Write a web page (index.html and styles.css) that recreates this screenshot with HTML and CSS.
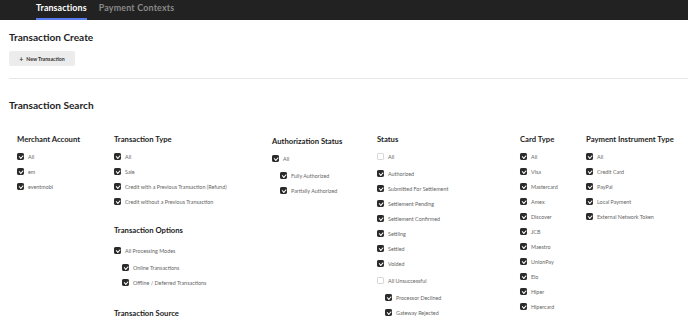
FILE: index.html
```html
<!DOCTYPE html>
<html lang="en">
<head>
<meta charset="utf-8">
<title>Transactions</title>
<link rel="stylesheet" href="styles.css">
</head>
<body>
<header class="topbar">
  <nav class="tabs">
    <a class="tab active">Transactions</a>
    <a class="tab">Payment Contexts</a>
  </nav>
</header>
<main class="page">
  <section class="create">
    <h2 class="section-title">Transaction Create</h2>
    <button class="btn"><span class="plus">+</span>New Transaction</button>
  </section>
  <hr class="divider">
  <section class="search">
    <h2 class="section-title">Transaction Search</h2>
    <div class="filters">
      <div class="col">
        <h3 class="group-title">Merchant Account</h3>
        <ul class="opts">
          <li class="opt"><span class="cb on"></span>All</li>
          <li class="opt"><span class="cb on"></span>em</li>
          <li class="opt"><span class="cb on"></span>eventmobi</li>
        </ul>
      </div>
      <div class="col">
        <h3 class="group-title">Transaction Type</h3>
        <ul class="opts">
          <li class="opt"><span class="cb on"></span>All</li>
          <li class="opt"><span class="cb on"></span>Sale</li>
          <li class="opt"><span class="cb on"></span>Credit with a Previous Transaction (Refund)</li>
          <li class="opt"><span class="cb on"></span>Credit without a Previous Transaction</li>
        </ul>
        <h3 class="group-title next">Transaction Options</h3>
        <ul class="opts wide">
          <li class="opt parent"><span class="cb on"></span>All Processing Modes</li>
          <li class="opt sub"><span class="cb on"></span>Online Transactions</li>
          <li class="opt sub"><span class="cb on"></span>Offline / Deferred Transactions</li>
        </ul>
        <h3 class="group-title next last">Transaction Source</h3>
      </div>
      <div class="col shifted">
        <h3 class="group-title">Authorization Status</h3>
        <ul class="opts">
          <li class="opt parent"><span class="cb on"></span>All</li>
          <li class="opt sub"><span class="cb on"></span>Fully Authorized</li>
          <li class="opt sub"><span class="cb on"></span>Partially Authorized</li>
        </ul>
      </div>
      <div class="col">
        <h3 class="group-title">Status</h3>
        <ul class="opts">
          <li class="opt parent"><span class="cb"></span>All</li>
          <li class="opt"><span class="cb on"></span>Authorized</li>
          <li class="opt"><span class="cb on"></span>Submitted For Settlement</li>
          <li class="opt"><span class="cb on"></span>Settlement Pending</li>
          <li class="opt"><span class="cb on"></span>Settlement Confirmed</li>
          <li class="opt"><span class="cb on"></span>Settling</li>
          <li class="opt"><span class="cb on"></span>Settled</li>
          <li class="opt"><span class="cb on"></span>Voided</li>
          <li class="opt parent gapped"><span class="cb"></span>All Unsuccessful</li>
          <li class="opt sub"><span class="cb on"></span>Processor Declined</li>
          <li class="opt sub"><span class="cb on"></span>Gateway Rejected</li>
        </ul>
      </div>
      <div class="col">
        <h3 class="group-title">Card Type</h3>
        <ul class="opts">
          <li class="opt"><span class="cb on"></span>All</li>
          <li class="opt"><span class="cb on"></span>Visa</li>
          <li class="opt"><span class="cb on"></span>Mastercard</li>
          <li class="opt"><span class="cb on"></span>Amex</li>
          <li class="opt"><span class="cb on"></span>Discover</li>
          <li class="opt"><span class="cb on"></span>JCB</li>
          <li class="opt"><span class="cb on"></span>Maestro</li>
          <li class="opt"><span class="cb on"></span>UnionPay</li>
          <li class="opt"><span class="cb on"></span>Elo</li>
          <li class="opt"><span class="cb on"></span>Hiper</li>
          <li class="opt"><span class="cb on"></span>Hipercard</li>
        </ul>
      </div>
      <div class="col">
        <h3 class="group-title">Payment Instrument Type</h3>
        <ul class="opts">
          <li class="opt"><span class="cb on"></span>All</li>
          <li class="opt"><span class="cb on"></span>Credit Card</li>
          <li class="opt"><span class="cb on"></span>PayPal</li>
          <li class="opt"><span class="cb on"></span>Local Payment</li>
          <li class="opt"><span class="cb on"></span>External Network Token</li>
        </ul>
      </div>
    </div>
  </section>
</main>
</body>
</html>
```
FILE: styles.css
```css
* { box-sizing: border-box; }
html, body { margin: 0; padding: 0; background: #fff; }
body {
  font-family: Lato, "Noto Sans", "Liberation Sans", sans-serif;
  color: #222;
  overflow: hidden;
}
.topbar {
  height: 20px;
  background: #222;
  padding-left: 36px;
}
.tabs { display: flex; gap: 12px; height: 20px; }
.tab {
  display: block;
  height: 20px;
  line-height: 15px;
  font-size: 8.9px;
  font-weight: 700;
  color: #8a8a8a;
  border-bottom: 2px solid transparent;
  letter-spacing: 0.1px;
}
.tab.active { color: #fff; border-bottom-color: #5b7cf0; }
.tab + .tab { letter-spacing: 0.2px; }

.page { padding-left: 9px; }
.section-title {
  margin: 0;
  font-size: 10.1px;
  line-height: 13px;
  font-weight: 700;
  color: #1d1d1d;
}
.create { padding-top: 11px; }
.btn {
  display: flex;
  align-items: center;
  justify-content: center;
  margin-top: 7px;
  width: 66px;
  height: 15px;
  padding: 0;
  border: 0;
  border-radius: 2px;
  background: #ececec;
  font-family: inherit;
  font-size: 5.2px;
  font-weight: 700;
  color: #333;
}
.plus { font-size: 7px; margin-right: 3px; }
.divider {
  margin: 12px 0 0;
  border: 0;
  border-top: 1px solid #e6e6e6;
}
.search { padding-top: 20px; }
.filters {
  display: grid;
  grid-template-columns: 97px 158px 105px 143px 66px 1fr;
  padding-left: 8px;
  margin-top: 22px;
  align-items: start;
}
.col.shifted { padding-top: 2px; }
.group-title {
  margin: 0;
  font-size: 7.7px;
  line-height: 10px;
  font-weight: 700;
  color: #1d1d1d;
}
.group-title.next { margin-top: 16px; }
.group-title.last { margin-top: 18px; }
.opts { list-style: none; margin: 5px 0 0; padding: 0; }
.opts.wide { margin-top: 8px; }
.opt {
  display: flex;
  align-items: center;
  height: 15px;
  font-size: 5.4px;
  color: #666;
  white-space: nowrap;
}
.opt.parent { margin-bottom: 2px; }
.opt.gapped { margin-top: 2px; }
.opt.sub { padding-left: 8px; }
.cb {
  position: relative;
  flex: none;
  width: 7px;
  height: 7px;
  margin-right: 4px;
  border-radius: 1.2px;
  border: 1px solid #d6d6d6;
  background: #fff;
}
.cb.on { background: #2a2a2a; border-color: #2a2a2a; }
.cb.on::after {
  content: "";
  position: absolute;
  left: 1.2px;
  top: 1.1px;
  width: 3px;
  height: 1.5px;
  border-left: 1px solid #fff;
  border-bottom: 1px solid #fff;
  transform: rotate(-45deg);
}
```
